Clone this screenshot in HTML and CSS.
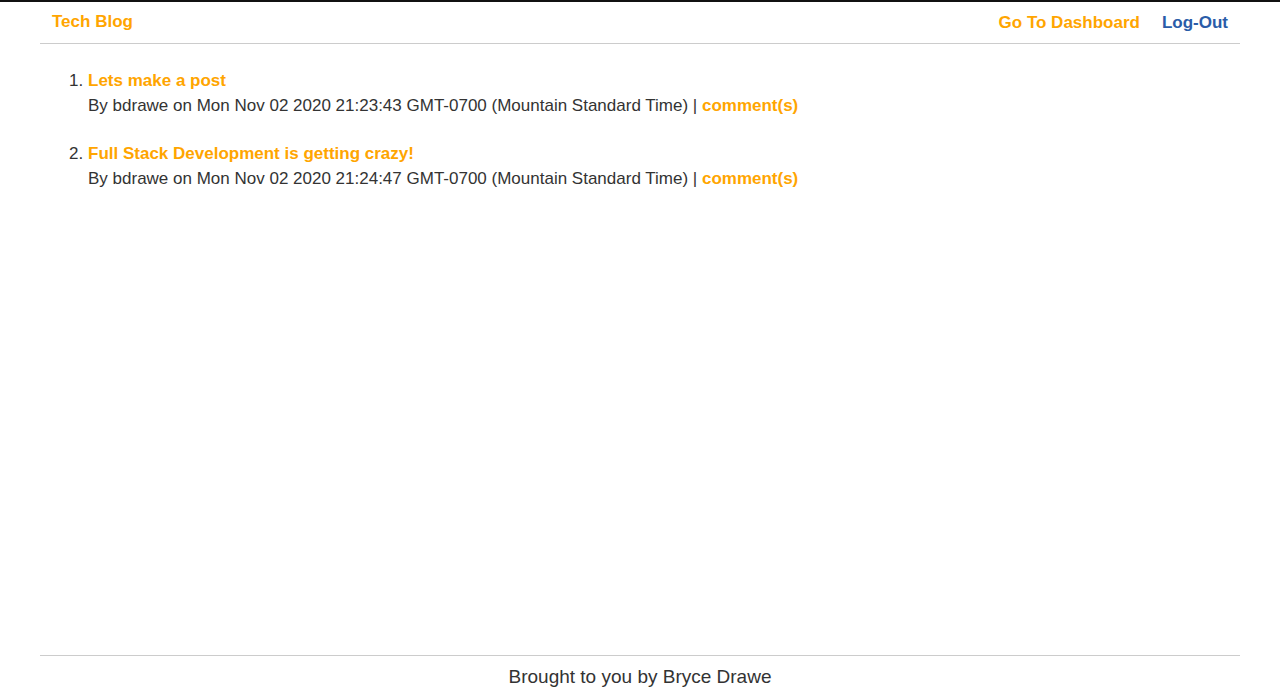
FILE: index.html
```html
<!DOCTYPE html>
<html>
<head>
<meta charset="utf-8">
<title>Tech Blog</title>
<link rel="stylesheet" href="styles.css">
</head>
<body>
<div class="page">
  <header class="header">
    <a class="brand" href="#">Tech Blog</a>
    <nav class="nav">
      <a class="nav-link" href="#">Go To Dashboard</a>
      <a class="nav-link logout" href="#">Log-Out</a>
    </nav>
  </header>
  <main class="main">
    <ol class="posts">
      <li class="post">
        <a class="post-title" href="#">Lets make a post</a>
        <div class="post-meta">By bdrawe on Mon Nov 02 2020 21:23:43 GMT-0700 (Mountain Standard Time) | <a class="comments" href="#">comment(s)</a></div>
      </li>
      <li class="post">
        <a class="post-title" href="#">Full Stack Development is getting crazy!</a>
        <div class="post-meta">By bdrawe on Mon Nov 02 2020 21:24:47 GMT-0700 (Mountain Standard Time) | <a class="comments" href="#">comment(s)</a></div>
      </li>
    </ol>
  </main>
  <footer class="footer">Brought to you by Bryce Drawe</footer>
</div>
</body>
</html>
```
FILE: styles.css
```css
html, body {
  margin: 0;
  padding: 0;
}
body {
  font-family: "Liberation Sans", Arial, Helvetica, sans-serif;
  color: #333;
  background: #fff;
  border-top: 2px solid #111;
}
a {
  text-decoration: none;
}
.page {
  width: 1200px;
  margin: 0 auto;
  min-height: calc(100vh - 2px);
  display: flex;
  flex-direction: column;
}
.header {
  display: flex;
  justify-content: space-between;
  align-items: flex-start;
  border-bottom: 1px solid #ccc;
  height: 41px;
  padding: 0 12px;
}
.brand {
  color: #ffa500;
  font-weight: bold;
  font-size: 17px;
  margin-top: 10px;
}
.nav {
  display: flex;
  gap: 22px;
  margin-top: 11px;
}
.nav-link {
  color: #ffa500;
  font-weight: bold;
  font-size: 17px;
}
.nav-link.logout {
  color: #2a5ca8;
}
.main {
  flex: 1;
  padding: 24px 8px 0;
}
.posts {
  margin: 0;
  padding-left: 40px;
  font-size: 17px;
}
.post {
  margin-bottom: 23px;
  line-height: 25px;
}
.post-title {
  color: #ffa500;
  font-weight: bold;
  font-size: 17px;
}
.post-meta {
  color: #333;
}
.comments {
  color: #ffa500;
  font-weight: bold;
  font-size: 17px;
}
.footer {
  border-top: 1px solid #ccc;
  text-align: center;
  font-size: 19px;
  padding: 10px 0 9px;
}
```
